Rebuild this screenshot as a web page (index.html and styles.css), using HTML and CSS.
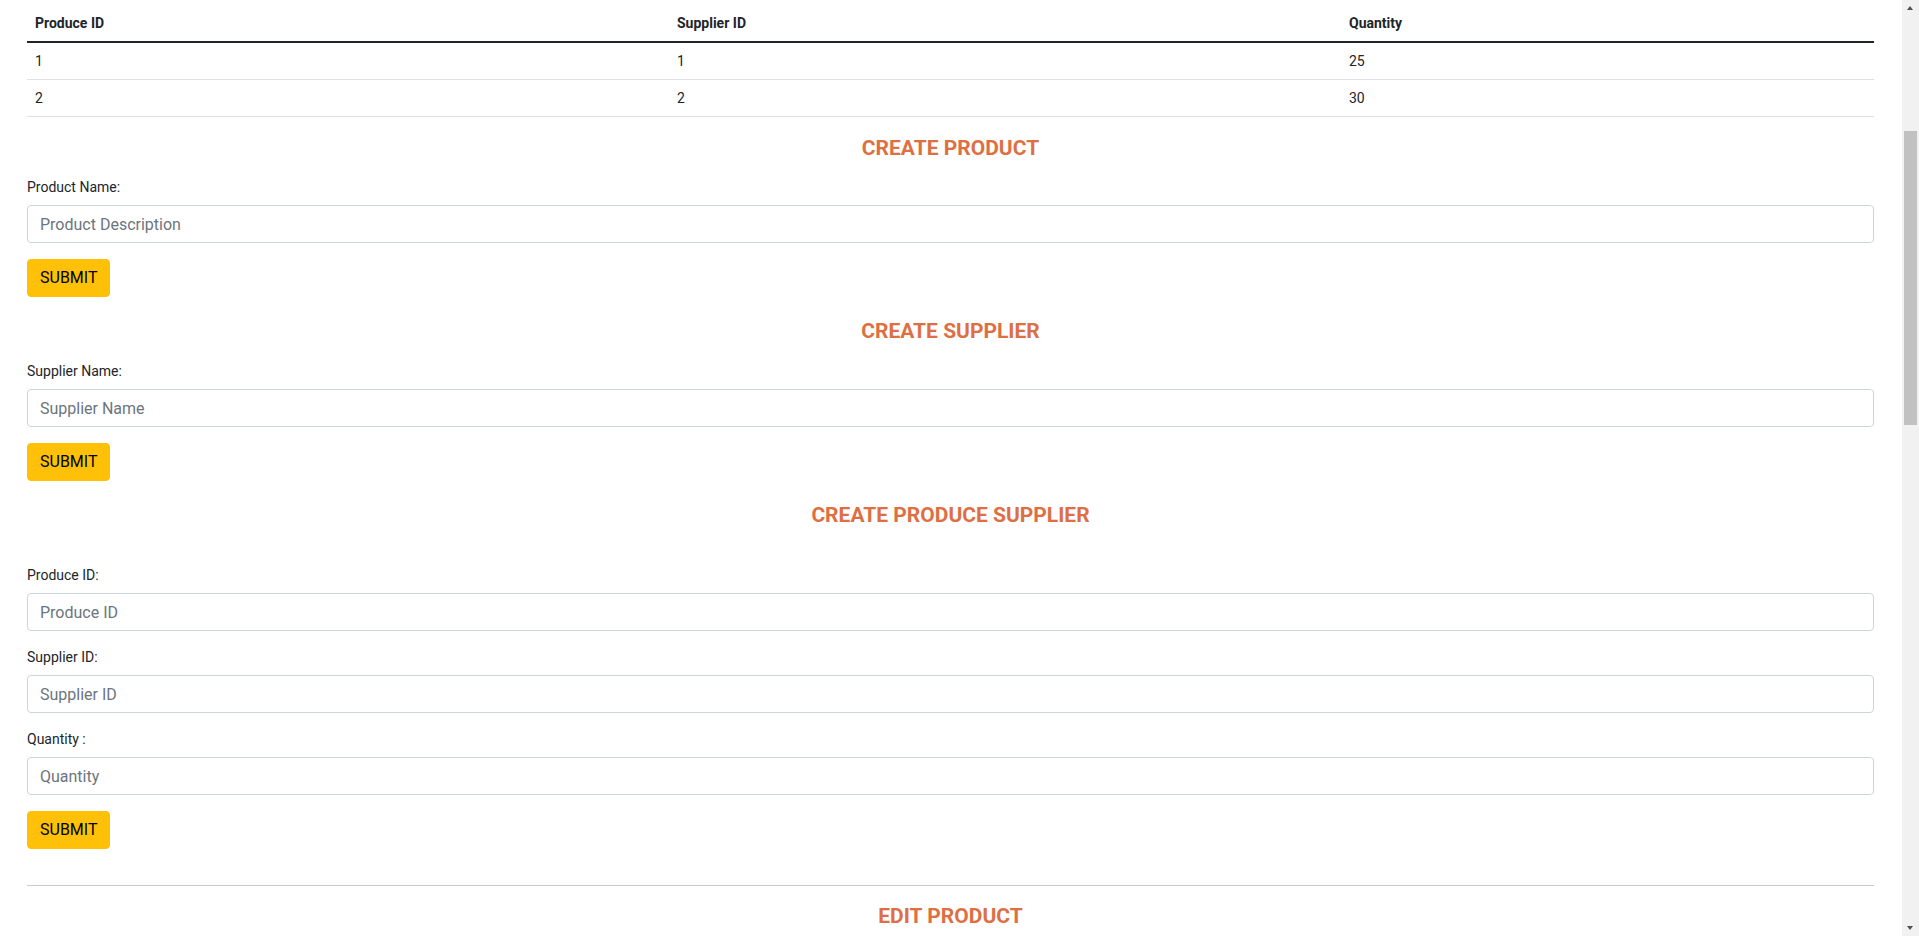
FILE: index.html
```html
<!DOCTYPE html>
<html lang="en">
<head>
<meta charset="utf-8">
<title>Produce Management</title>
<link rel="stylesheet" href="styles.css">
</head>
<body>
<main class="page">
  <table class="data-table">
    <thead>
      <tr>
        <th class="col-a">Produce ID</th>
        <th class="col-b">Supplier ID</th>
        <th>Quantity</th>
      </tr>
    </thead>
    <tbody>
      <tr><td>1</td><td>1</td><td>25</td></tr>
      <tr><td>2</td><td>2</td><td>30</td></tr>
    </tbody>
  </table>

  <h2 class="section-title section-title--first">CREATE PRODUCT</h2>
  <form class="entry-form">
    <div class="field">
      <label class="field-label" for="p-name">Product Name:</label>
      <input class="field-input" id="p-name" type="text" placeholder="Product Description">
    </div>
    <button class="btn-submit" type="button">SUBMIT</button>
  </form>

  <h2 class="section-title">CREATE SUPPLIER</h2>
  <form class="entry-form">
    <div class="field">
      <label class="field-label" for="s-name">Supplier Name:</label>
      <input class="field-input" id="s-name" type="text" placeholder="Supplier Name">
    </div>
    <button class="btn-submit" type="button">SUBMIT</button>
  </form>

  <h2 class="section-title">CREATE PRODUCE SUPPLIER</h2>
  <form class="entry-form entry-form--spaced">
    <div class="field">
      <label class="field-label" for="ps-produce">Produce ID:</label>
      <input class="field-input" id="ps-produce" type="text" placeholder="Produce ID">
    </div>
    <div class="field">
      <label class="field-label" for="ps-supplier">Supplier ID:</label>
      <input class="field-input" id="ps-supplier" type="text" placeholder="Supplier ID">
    </div>
    <div class="field">
      <label class="field-label" for="ps-qty">Quantity :</label>
      <input class="field-input" id="ps-qty" type="text" placeholder="Quantity">
    </div>
    <button class="btn-submit" type="button">SUBMIT</button>
  </form>

  <hr class="divider">

  <h2 class="section-title">EDIT PRODUCT</h2>
  <form class="entry-form">
    <div class="field">
      <label class="field-label" for="e-pid">Product ID:</label>
      <input class="field-input" id="e-pid" type="text" placeholder="Product ID">
    </div>
    <div class="field">
      <label class="field-label" for="e-pname">Product Name:</label>
      <input class="field-input" id="e-pname" type="text" placeholder="Product Description">
    </div>
    <button class="btn-submit" type="button">SUBMIT</button>
  </form>

  <h2 class="section-title">EDIT SUPPLIER</h2>
  <form class="entry-form">
    <div class="field">
      <label class="field-label" for="e-sid">Supplier ID:</label>
      <input class="field-input" id="e-sid" type="text" placeholder="Supplier ID">
    </div>
    <div class="field">
      <label class="field-label" for="e-sname">Supplier Name:</label>
      <input class="field-input" id="e-sname" type="text" placeholder="Supplier Name">
    </div>
    <button class="btn-submit" type="button">SUBMIT</button>
  </form>

  <h2 class="section-title">EDIT PRODUCE SUPPLIER</h2>
  <form class="entry-form">
    <div class="field">
      <label class="field-label" for="e-ppid">Produce ID:</label>
      <input class="field-input" id="e-ppid" type="text" placeholder="Produce ID">
    </div>
    <div class="field">
      <label class="field-label" for="e-psid">Supplier ID:</label>
      <input class="field-input" id="e-psid" type="text" placeholder="Supplier ID">
    </div>
    <div class="field">
      <label class="field-label" for="e-pqty">Quantity :</label>
      <input class="field-input" id="e-pqty" type="text" placeholder="Quantity">
    </div>
    <button class="btn-submit" type="button">SUBMIT</button>
  </form>
</main>

<div class="fake-scrollbar" aria-hidden="true">
  <span class="fake-scrollbar__arrow fake-scrollbar__arrow--up"></span>
  <span class="fake-scrollbar__thumb"></span>
  <span class="fake-scrollbar__arrow fake-scrollbar__arrow--down"></span>
</div>
</body>
</html>
```

FILE: styles.css
```css
html {
  overflow: hidden;
}

body {
  margin: 0;
  font-family: Roboto, "Liberation Sans", Arial, sans-serif;
  font-size: 14px;
  color: #212529;
  background: #ffffff;
}

.page {
  padding: 5px 45px 400px 27px;
}

.data-table {
  width: 100%;
  border-collapse: collapse;
  font-size: 14px;
}

.data-table th,
.data-table td {
  padding: 8px;
  line-height: 20px;
  text-align: left;
  vertical-align: top;
}

.data-table th {
  font-weight: 700;
  border-bottom: 2px solid #212529;
}

.data-table td {
  border-bottom: 1px solid #dee2e6;
}

.col-a {
  width: 626px;
}

.col-b {
  width: 656px;
}

.section-title {
  margin: 18px 0 18px;
  font-size: 21px;
  line-height: 24px;
  font-weight: 700;
  text-align: center;
  color: #de6f43;
}

.section-title--first {
  margin-top: 19px;
  margin-bottom: 17px;
}

.entry-form {
  margin: 0;
  padding-bottom: 4px;
}

.entry-form--spaced {
  padding-top: 20px;
}

.field {
  margin-bottom: 16px;
}

.field-label {
  display: block;
  margin-bottom: 8px;
  font-size: 14px;
  line-height: 20px;
}

.field-input {
  display: block;
  box-sizing: border-box;
  width: 100%;
  height: 38px;
  padding: 6px 12px;
  font-family: inherit;
  font-size: 16px;
  line-height: 24px;
  color: #212529;
  background: #fff;
  border: 1px solid #ced4da;
  border-radius: 4px;
  outline: none;
}

.field-input::placeholder {
  color: #6c757d;
  opacity: 1;
}

.btn-submit {
  display: inline-block;
  vertical-align: top;
  box-sizing: border-box;
  height: 38px;
  padding: 6px 12px;
  font-family: inherit;
  font-size: 16px;
  line-height: 24px;
  color: #000;
  background: #ffc107;
  border: 1px solid #ffc107;
  border-radius: 4px;
  cursor: pointer;
}

.divider {
  margin: 32px 0 0;
  border: 0;
  border-top: 1px solid #c8c9ca;
  height: 0;
}

/* Browser scrollbar as seen in the screenshot (drawn over the page edge) */
.fake-scrollbar {
  position: fixed;
  top: 0;
  right: 0;
  width: 17px;
  height: 100vh;
  background: #f1f1f1;
}

.fake-scrollbar__thumb {
  position: absolute;
  top: 131px;
  left: 2px;
  width: 13px;
  height: 294px;
  background: #c1c1c1;
}

.fake-scrollbar__arrow {
  position: absolute;
  left: 5px;
  width: 0;
  height: 0;
  border-left: 3.5px solid transparent;
  border-right: 3.5px solid transparent;
}

.fake-scrollbar__arrow--up {
  top: 6px;
  border-bottom: 4px solid #505050;
}

.fake-scrollbar__arrow--down {
  bottom: 6px;
  border-top: 4px solid #505050;
}
```
